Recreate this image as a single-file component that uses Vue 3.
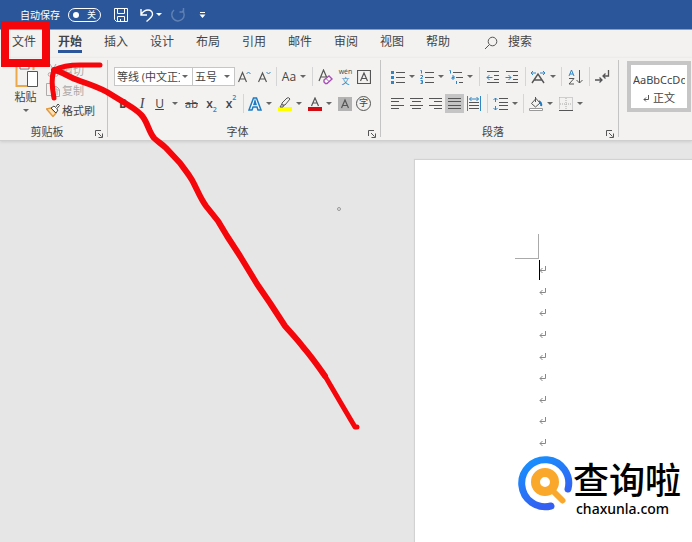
<script setup>
import { ref } from 'vue'

const autoSave = ref(false)
const fontName = ref('等线 (中文正文)')
const fontSize = ref('五号')
const activeTab = ref('开始')
const tabs = ['文件', '开始', '插入', '设计', '布局', '引用', '邮件', '审阅', '视图', '帮助']
const paragraphs = 9
</script>

<template>
  <div class="app">
    <header class="titlebar">
      <label class="autosave">
        <span>自动保存</span>
        <input v-model="autoSave" type="checkbox" class="sr" />
        <span class="switch"><i class="knob"></i><b>{{ autoSave ? '开' : '关' }}</b></span>
      </label>
      <div class="quick">
        <button aria-label="保存">
          <svg width="16" height="16" viewBox="0 0 16 16"><path d="M1.500 1.500h13v13h-11l-2-2zM4.500 1.500v5h7v-5M4.500 14.500v-5h7v5M7.500 14v-2" /></svg>
        </button>
        <button aria-label="撤消">
          <svg width="15" height="16" viewBox="0 0 15 16"><path d="M2 2v6h6M2 7.500C4 4.500 6.500 3 9 3c3 0 4.500 2 4.500 4.200 0 2.500-2 4-6 7.300" stroke-width="1.400" /></svg>
          <span class="caret"></span>
        </button>
        <button aria-label="恢复" class="dim">
          <svg width="16" height="16" viewBox="0 0 16 16"><path d="M4 3A6.200 6.200 0 1 0 12.500 3.500M13.500 1v4h-4" stroke-width="1.400" /></svg>
        </button>
        <button aria-label="自定义快速访问工具栏">
          <svg width="7" height="7" viewBox="0 0 7 7"><path d="M1 1.500h5" /><path class="solid" d="M.5 3.500h6L3.500 7z" /></svg>
        </button>
      </div>
    </header>

    <nav class="tabs">
      <button v-for="t in tabs" :key="t" :class="{ active: t === activeTab }" @click="activeTab = t"><span>{{ t }}</span></button>
      <button class="search">
        <svg width="14" height="14" viewBox="0 0 14 14"><circle cx="8.500" cy="5.500" r="4.300" /><path d="M5.300 8.700L1 13" /></svg>
        <span>搜索</span>
      </button>
    </nav>

    <section class="ribbon">
      <div class="group clipboard">
        <div class="clip-body">
          <button class="paste">
            <svg width="26" height="31" viewBox="0 0 26 31">
              <path d="M3.500 3v25h11" fill="none" stroke="#eba94b" stroke-width="2" />
              <path d="M3.500 4h17v8" fill="none" stroke="#eba94b" stroke-width="2" />
              <path d="M7 2h9v9H7z" fill="#fff" stroke="#777" />
              <path d="M14.500 13.500h10v15h-10z" fill="#fff" stroke="#555" />
            </svg>
            <span>粘贴</span>
            <i class="caret"></i>
          </button>
          <div class="clip-list">
            <button disabled>
              <svg width="14" height="14" viewBox="0 0 14 14" fill="none" stroke="#b5b0b0"><path d="M4 1l5 9M10 1L5 10" /><circle cx="4" cy="11.500" r="1.800" /><circle cx="10" cy="11.500" r="1.800" /></svg>
              <span>剪切</span>
            </button>
            <button disabled>
              <svg width="14" height="14" viewBox="0 0 14 14"><path d="M5 12.500H.5V.5h6l1 1M5.500 3.500h5l3 3v7h-8zM10 4v3h3M8 9h4M8 11h4" /></svg>
              <span>复制</span>
            </button>
            <button>
              <svg width="14" height="14" viewBox="0 0 14 14"><path d="M.5 6l4.500-1 5 5-3 3.500z" fill="#fbe3c0" stroke="#e59a3c" stroke-width="1.500" /><path d="M5 5l3-2 1.500 1.500L12 1l1.500 1.500L10.500 6 12 7l-2 3z" fill="#fff" stroke="#444" /></svg>
              <span>格式刷</span>
            </button>
          </div>
        </div>
        <footer><span>剪贴板</span><button aria-label="剪贴板选项"><svg width="8" height="8" viewBox="0 0 8 8"><path d="M.5 6V.5H6M3 3l3.500 3.500M7.500 3.500v4h-4" /></svg></button></footer>
      </div>

      <div class="group font">
        <div class="rows">
          <div class="row font-a">
            <label class="combo"><select v-model="fontName" aria-label="字体"><option>等线 (中文正文)</option></select><i class="caret"></i></label>
            <label class="combo"><select v-model="fontSize" aria-label="字号"><option>五号</option></select><i class="caret"></i></label>
            <button aria-label="增大字号"><svg width="13" height="14" viewBox="0 0 13 14"><path d="M.5 12L4.500 2.500 8.500 12M2 9h5" stroke-width="1.200" /><path class="blue" d="M8.500 4l2-2 2 2" /></svg></button>
            <button aria-label="减小字号"><svg width="13" height="14" viewBox="0 0 13 14"><path d="M.5 12L4.500 3 8.500 12M2 9h5" stroke-width="1.200" /><path class="blue" d="M8.500 2l2 2 2-2" /></svg></button>
            <i class="sep"></i>
            <button class="latin">Aa<i class="caret"></i></button>
            <i class="sep"></i>
            <button aria-label="清除格式"><svg width="15" height="16" viewBox="0 0 15 16"><path d="M1 12L5.500 1 9 9M3 8h5" stroke-width="1.200" /><path d="M6 11l5-4 3 3-5 4.500H7.500L6 13z" fill="#fff" stroke="#a74fb5" stroke-width="1.400" /><path d="M8 9.500l3 3" stroke="#a74fb5" /></svg></button>
            <button class="wen" aria-label="拼音指南"><small>wén</small><span>文</span></button>
            <button aria-label="字符边框"><svg width="14" height="14" viewBox="0 0 14 14"><path d="M.5.500h13v13H.5zM3.500 11L7 3l3.500 8M4.800 8.500h4.400" stroke-width="1.200" /></svg></button>
          </div>
          <div class="row font-b">
            <button class="latin bold">B</button>
            <button class="latin italic">I</button>
            <button class="latin"><u>U</u><i class="caret"></i></button>
            <button class="latin strike">ab</button>
            <button class="latin script">x<sub>2</sub></button>
            <button class="latin script">x<sup>2</sup></button>
            <i class="sep"></i>
            <button aria-label="文本效果"><svg width="14" height="14" viewBox="0 0 14 14"><path d="M1 13L5.500 1h3L13 13h-3l-1-3H5l-1 3zM6 7.500h2L7 4z" fill="#fff" stroke="#1f7bc0" stroke-width="1.500" /></svg><i class="caret"></i></button>
            <button aria-label="突出显示"><svg width="14" height="14" viewBox="0 0 14 14"><path d="M0 10h14v4H0z" fill="#ffff00" stroke="none" /><path d="M4 6l5-5q2-1 3 1L7 8H4zM4 7l-2 3h3l1-2" /></svg><i class="caret"></i></button>
            <button aria-label="字体颜色"><svg width="14" height="14" viewBox="0 0 14 14"><path d="M0 10h14v4H0z" fill="#d20a11" stroke="none" /><path d="M3.500 9L7 1l3.500 8M4.800 6h4.400" stroke-width="1.200" /></svg><i class="caret"></i></button>
            <button aria-label="字符底纹"><svg width="14" height="14" viewBox="0 0 14 14"><path d="M0 0h14v14H0z" fill="#b3b3b3" stroke="none" /><path d="M3.500 11L7 3l3.500 8M4.800 8.500h4.400" stroke-width="1.200" /></svg></button>
            <button aria-label="带圈字符"><span class="ring">字</span></button>
          </div>
        </div>
        <footer><span>字体</span><button aria-label="字体选项"><svg width="8" height="8" viewBox="0 0 8 8"><path d="M.5 6V.5H6M3 3l3.500 3.500M7.500 3.500v4h-4" /></svg></button></footer>
      </div>

      <div class="group para">
        <div class="rows">
          <div class="row para-a">
            <button aria-label="项目符号"><svg width="14" height="14" viewBox="0 0 14 14"><path d="M5 2.500h9M5 7.500h9M5 12.500h9" /><path class="bluefill" d="M0 1h3v3H0zM0 6h3v3H0zM0 11h3v3H0z" /></svg><i class="caret"></i></button>
            <button aria-label="编号"><svg width="14" height="14" viewBox="0 0 14 14"><path d="M5 2.500h9M5 7.500h9M5 12.500h9" /><path class="blue" d="M.5.500h1v3M.5 5.500h2v1.500l-2 1.500h2M.5 10.500h2v3h-2M1 12h1" /></svg><i class="caret"></i></button>
            <button aria-label="多级列表"><svg width="14" height="14" viewBox="0 0 14 14"><path d="M4 2.500h9M7 7.500h7M10 12.500h4" /><path class="blue" d="M.5.500h1v3M3 6h2v3H3V7.500h2M7.500 11v3" /></svg><i class="caret"></i></button>
            <i class="sep"></i>
            <button aria-label="减少缩进量"><svg width="14" height="14" viewBox="0 0 14 14"><path d="M1 1.500h12M8 5.500h5M8 9.500h5M1 12.500h12" /><path class="blue" d="M6.500 7.500H1M3.500 5L1 7.500 3.500 10" /></svg></button>
            <button aria-label="增加缩进量"><svg width="14" height="14" viewBox="0 0 14 14"><path d="M1 1.500h12M8 5.500h5M8 9.500h5M1 12.500h12" /><path class="blue" d="M.5 7.500H6M3.500 5L6 7.500 3.500 10" /></svg></button>
            <i class="sep"></i>
            <button aria-label="中文版式"><svg width="16" height="14" viewBox="0 0 16 14"><path d="M2 13l6-9 6 9M4.500 10h7" stroke-width="1.400" /><path class="blue" d="M6 3H1M3 1L1 3l2 2M10 3h5M13 1l2 2-2 2" /></svg><i class="caret"></i></button>
            <i class="sep"></i>
            <button aria-label="排序"><svg width="15" height="16" viewBox="0 0 15 16"><path class="blue" d="M1 7L3.500 1 6 7M2 5h3" /><path d="M1 9.500h5L1 15h5M11.500 1v13M8.500 11l3 3 3-3" /></svg></button>
            <i class="sep"></i>
            <button aria-label="显示编辑标记"><svg width="16" height="14" viewBox="0 0 16 14"><path d="M1 10h7M5.500 7.500L8 10l-2.500 2.500M14.500 0v6H9M11.500 3.500L9 6l2.500 2.500" stroke-width="1.300" /></svg></button>
          </div>
          <div class="row para-b">
            <button aria-label="左对齐"><svg width="13" height="13" viewBox="0 0 13 13"><path d="M0 1.500h13M0 4.500h8M0 8.500h13M0 11.500h8" /></svg></button>
            <button aria-label="居中"><svg width="13" height="13" viewBox="0 0 13 13"><path d="M0 1.500h13M2 4.500h9M0 8.500h13M2 11.500h9" /></svg></button>
            <button aria-label="右对齐"><svg width="13" height="13" viewBox="0 0 13 13"><path d="M0 1.500h13M5 4.500h8M0 8.500h13M5 11.500h8" /></svg></button>
            <button aria-label="两端对齐" class="on"><svg width="13" height="13" viewBox="0 0 13 13"><path d="M0 1.500h13M0 4.500h13M0 8.500h13M0 11.500h13" /></svg></button>
            <button aria-label="分散对齐"><svg width="14" height="15" viewBox="0 0 14 15"><path d="M2 6.500h10M2 9.500h10M2 12.500h10" /><path class="blue" d="M.5 0v15M13.500 0v15M2.500 3h9M4.500 1l-2 2 2 2M9.500 1l2 2-2 2" /></svg></button>
            <i class="sep"></i>
            <button aria-label="行距"><svg width="15" height="14" viewBox="0 0 15 14"><path d="M6 1.500h9M6 5.500h9M6 8.500h9M6 12.500h9" /><path class="blue" d="M2.500 1v4M.5 3l2-2 2 2M2.500 9v4M.5 11l2 2 2-2" /></svg><i class="caret"></i></button>
            <i class="sep"></i>
            <button aria-label="底纹"><svg width="14" height="14" viewBox="0 0 14 14"><path d="M2.500 6.500l4.500-5 4 4.500-4.500 4zM6.500 0v5" /><path d="M10 4q3 2 2 5" stroke="#1f7bc0" stroke-width="2" /><path d="M.5 11.500h13v2H.5z" fill="#fff" stroke="#999" /></svg><i class="caret"></i></button>
            <button aria-label="边框"><svg width="14" height="14" viewBox="0 0 14 14"><path d="M.5.500h13v12M.5.500v12M7 1v12M1 7h12" stroke="#aaa" stroke-dasharray="1 1" /><path d="M0 13.500h14" /></svg><i class="caret"></i></button>
          </div>
        </div>
        <footer><span>段落</span><button aria-label="段落选项"><svg width="8" height="8" viewBox="0 0 8 8"><path d="M.5 6V.5H6M3 3l3.500 3.500M7.500 3.500v4h-4" /></svg></button></footer>
      </div>

      <div class="styles">
        <button class="style-card">
          <span class="sample">AaBbCcDd</span>
          <span class="style-name"><svg width="6" height="7" viewBox="0 0 6 7"><path d="M5.500 0v4.500H1M3 2.500l-2 2 2 2" /></svg>正文</span>
        </button>
      </div>
    </section>

    <main class="workspace">
      <i class="speck"></i>
      <article class="page">
        <i class="corner"></i>
        <div class="marks">
          <svg v-for="n in paragraphs" :key="n" width="8" height="8" viewBox="0 0 8 8"><path d="M6.500 0v4.500H1M3.500 2L1 4.500 3.500 7" /></svg>
        </div>
      </article>
      <div class="brand">
        <svg width="56" height="56" viewBox="0 0 56 56">
          <defs><linearGradient id="ringBlue" x1="0" y1="0" x2=".5" y2="1"><stop offset="0" stop-color="#1593ff" /><stop offset="1" stop-color="#345ff2" /></linearGradient></defs>
          <path d="M34 51A23.500 23.500 0 1 1 51 34" fill="none" stroke="url(#ringBlue)" stroke-width="7" stroke-linecap="round" />
          <circle cx="28" cy="27" r="9.500" fill="none" stroke="#f9a82c" stroke-width="9" />
          <path d="M37 37l8.500 8.500" stroke="#f9a82c" stroke-width="6" stroke-linecap="round" />
        </svg>
        <div class="brand-text"><strong>查询啦</strong><span>chaxunla.com</span></div>
      </div>
    </main>

    <svg class="ink" width="692" height="542" viewBox="0 0 692 542">
      <rect x="5" y="25" width="41" height="38" stroke-width="8" />
      <path d="M54 70C62 66 70 65 80 65H100M54 70C51 78 52 88 54 98" stroke-width="5" />
      <path d="M54 70C61 71 68 77 80 81S98 87 107 92L125 103C133 108 139 111 143 117C148 124 149 132 154 138C158 142 162 144 166 148L180 163C185 170 188 173 192 180C197 189 200 198 206 206L218 221L227 236L240 256L257 284L270 303L285 326C291 333 297 339 303 347C311 356 318 366 325 376" stroke-width="6" />
      <path d="M325 376L342 405L355 427H357" stroke-width="5" />
    </svg>
  </div>
</template>

<style>
body {
  margin: 0;
}
</style>

<style scoped>
.app {
  position: relative;
  display: flex;
  flex-direction: column;
  min-height: 100vh;
  overflow: hidden;
  background: #e6e6e6;
  color: #444;
  font-family: "Open Sans", "Noto Sans CJK SC", sans-serif;
  font-size: 11px;
}
button {
  display: flex;
  align-items: center;
  justify-content: center;
  padding: 0;
  border: 0;
  background: none;
  color: inherit;
  font: inherit;
  white-space: nowrap;
}
svg {
  flex: none;
  fill: none;
  stroke: #555;
}
.caret {
  flex: none;
  width: 0;
  height: 0;
  border: 3px solid transparent;
  border-top-color: #666;
  border-bottom: 0;
}
.sr {
  position: absolute;
  opacity: 0;
}

.titlebar {
  display: flex;
  align-items: center;
  height: 29px;
  padding-left: 20px;
  border-bottom: 1px solid #8c9fc8;
  background: #2b579a;
  color: #fff;
}
.autosave {
  display: flex;
  align-items: center;
  gap: 8px;
  font-size: 10px;
}
.switch {
  display: flex;
  align-items: center;
  justify-content: space-between;
  box-sizing: border-box;
  width: 33px;
  height: 14px;
  padding: 0 4px;
  border: 1px solid #fff;
  border-radius: 7px;
}
.switch b {
  font-weight: 400;
  font-size: 9px;
  line-height: 12px;
}
.knob {
  width: 6px;
  height: 6px;
  border-radius: 50%;
  background: #fff;
}
.quick {
  display: flex;
  align-items: center;
  gap: 8px;
  padding-left: 12px;
}
.quick button {
  gap: 2px;
}
.quick button:nth-child(2) {
  padding-left: 2px;
}
.quick button:last-child {
  padding-left: 5px;
}
.quick svg {
  stroke: #fff;
}
.quick .solid {
  fill: #fff;
  stroke: none;
}
.quick .caret {
  border-top-color: #fff;
}
.quick .dim {
  opacity: .25;
}

.tabs {
  display: flex;
  height: 28px;
  padding-left: 1px;
  background: #f3f2f1;
  font-size: 12px;
}
.tabs button {
  align-items: flex-start;
  width: 46px;
  padding-top: 4px;
  line-height: 16px;
}
.tabs .active span {
  border-bottom: 3px solid #2b579a;
  color: #444;
  font-weight: 700;
}
.tabs .search {
  gap: 10px;
  width: auto;
  padding-left: 23px;
}
.tabs .search svg {
  margin-top: 2px;
}

.ribbon {
  display: flex;
  height: 82px;
  border-bottom: 1px solid #cfcfcf;
  background: #f3f2f1;
  box-shadow: 0 1px 3px #ccc;
}
.group {
  display: flex;
  flex: none;
  flex-direction: column;
  position: relative;
  box-sizing: border-box;
}
.group::after {
  content: "";
  position: absolute;
  inset: 2px 0 3px auto;
  width: 1px;
  background: #c4c4c4;
}
.clipboard {
  width: 108px;
}
.font {
  width: 273px;
}
.para {
  width: 238px;
}
.group footer {
  display: flex;
  align-items: center;
  height: 14px;
  padding-right: 4px;
  line-height: 14px;
}
.group footer span {
  flex: 1;
  text-align: center;
}
.group footer button {
  width: 10px;
  padding-top: 4px;
}
.clip-body {
  display: flex;
  height: 67px;
}
.paste {
  flex-direction: column;
  justify-content: flex-start;
  width: 46px;
  padding-left: 5px;
}
.paste span {
  margin-bottom: 4px;
  line-height: 16px;
}
.clip-list {
  display: flex;
  flex-direction: column;
  padding-top: 2px;
}
.clip-list button {
  justify-content: flex-start;
  gap: 2px;
  height: 20px;
}
.clip-list button:disabled {
  color: #aaa;
}
.clip-list button:disabled svg {
  stroke: #b0abab;
}
.rows {
  display: flex;
  flex-direction: column;
  gap: 8px;
  height: 58px;
  padding: 9px 0 0 6px;
}
.row {
  display: grid;
  height: 19px;
}
.row button {
  gap: 4px;
}
.font-a {
  grid-template-columns: 79px 42px 19px 20px 4px 32px 4px 22px 19px 18px;
}
.font-b {
  grid-template-columns: 18px 20px 29px 21px 19px 20px 4px 30px 30px 30px 19px 19px;
}
.para .rows {
  padding-left: 7px;
}
.para-a {
  grid-template-columns: 29px 30px 28px 8px 19px 20px 6px 30px 6px 22px 6px 20px;
}
.para-b {
  grid-template-columns: 19px 19px 19px 19px 20px 6px 30px 6px 30px 30px;
}
.sep {
  justify-self: center;
  width: 1px;
  background: #d5d5d5;
}
.on {
  background: #c5c5c5;
}
.row .blue {
  stroke: #2f86c5;
}
.row .bluefill {
  fill: #2f86c5;
  stroke: none;
}
.combo {
  display: flex;
  align-items: center;
  min-width: 0;
  padding-right: 4px;
  border: 1px solid #c6c6c6;
  background: #fff;
}
.combo + .combo {
  border-left: 0;
}
.combo select {
  flex: 1;
  min-width: 0;
  height: 17px;
  padding: 0 2px;
  border: 0;
  appearance: none;
  background: none;
  color: #444;
  font: inherit;
  line-height: 17px;
}
.latin {
  font-size: 12px;
}
.row .bold {
  font-weight: 700;
}
.row .italic {
  font-family: "Liberation Serif", serif;
  font-size: 14px;
  font-style: italic;
}
.row .latin u {
  margin-right: 4px;
}
.row .strike {
  font-size: 11px;
  text-decoration: line-through;
}
.row .script {
  gap: 0;
  font-weight: 600;
}
.script sub,
.script sup {
  color: #2f86c5;
  font-size: 7px;
  line-height: 7px;
}
.script sub {
  align-self: flex-end;
}
.script sup {
  align-self: flex-start;
}
.row .wen {
  flex-direction: column;
  gap: 0;
}
.wen small {
  font-size: 7px;
  line-height: 8px;
}
.wen span {
  color: #2f86c5;
  font-size: 8px;
  line-height: 9px;
}
.ring {
  width: 13px;
  height: 13px;
  border: 1px solid #555;
  border-radius: 50%;
  font-size: 9px;
  line-height: 12px;
  text-align: center;
}
.styles {
  flex: 1;
  min-width: 0;
  padding: 3px 0 0 8px;
}
.style-card {
  flex-direction: column;
  align-items: stretch;
  box-sizing: border-box;
  width: 64px;
  height: 51px;
  padding: 6px 2px 0;
  border: 4px solid #c6c6c6;
  background: #fff;
}
.sample {
  overflow: hidden;
  font-family: "Noto Sans", sans-serif;
  line-height: 18px;
  text-align: left;
}
.style-name {
  display: flex;
  align-items: center;
  justify-content: center;
  gap: 4px;
  line-height: 20px;
}

.workspace {
  position: relative;
  display: grid;
  flex: 1;
  grid-template-columns: 3fr 2fr;
  padding-top: 19px;
}
.speck {
  position: absolute;
  top: 66px;
  left: 337px;
  width: 2px;
  height: 2px;
  border: 1px solid #999;
  border-radius: 50%;
}
.page {
  grid-column: 2;
  padding: 74px 0 0 100px;
  background: #fff;
  box-shadow: 0 0 1px 1px #d2d2d2;
}
.corner {
  display: block;
  width: 23px;
  height: 24px;
  border: solid #aaa;
  border-width: 0 1px 1px 0;
}
.marks {
  display: flex;
  flex-direction: column;
  justify-content: space-between;
  position: relative;
  height: 181px;
  margin-left: 24px;
  padding-top: 7px;
}
.marks::before {
  content: "";
  position: absolute;
  top: 1px;
  left: 0;
  width: 1px;
  height: 20px;
  background: #000;
}
.marks svg {
  stroke: #888;
}
.brand {
  display: flex;
  position: absolute;
  right: 11px;
  bottom: 24px;
  color: #000;
}
.brand > svg {
  margin-top: -1px;
}
.brand-text {
  display: flex;
  flex-direction: column;
}
.brand-text strong {
  font-family: "Noto Sans CJK SC", sans-serif;
  font-size: 36px;
  font-weight: 500;
  line-height: 44px;
}
.brand-text span {
  padding-left: 3px;
  font-family: "Noto Sans", sans-serif;
  font-size: 14px;
  font-weight: 500;
  line-height: 18px;
}
.ink {
  position: absolute;
  top: 0;
  left: 0;
  pointer-events: none;
}
.ink * {
  stroke: #f5060a;
  stroke-linecap: round;
  stroke-linejoin: round;
}
.ink rect {
  stroke-linejoin: miter;
}
</style>
